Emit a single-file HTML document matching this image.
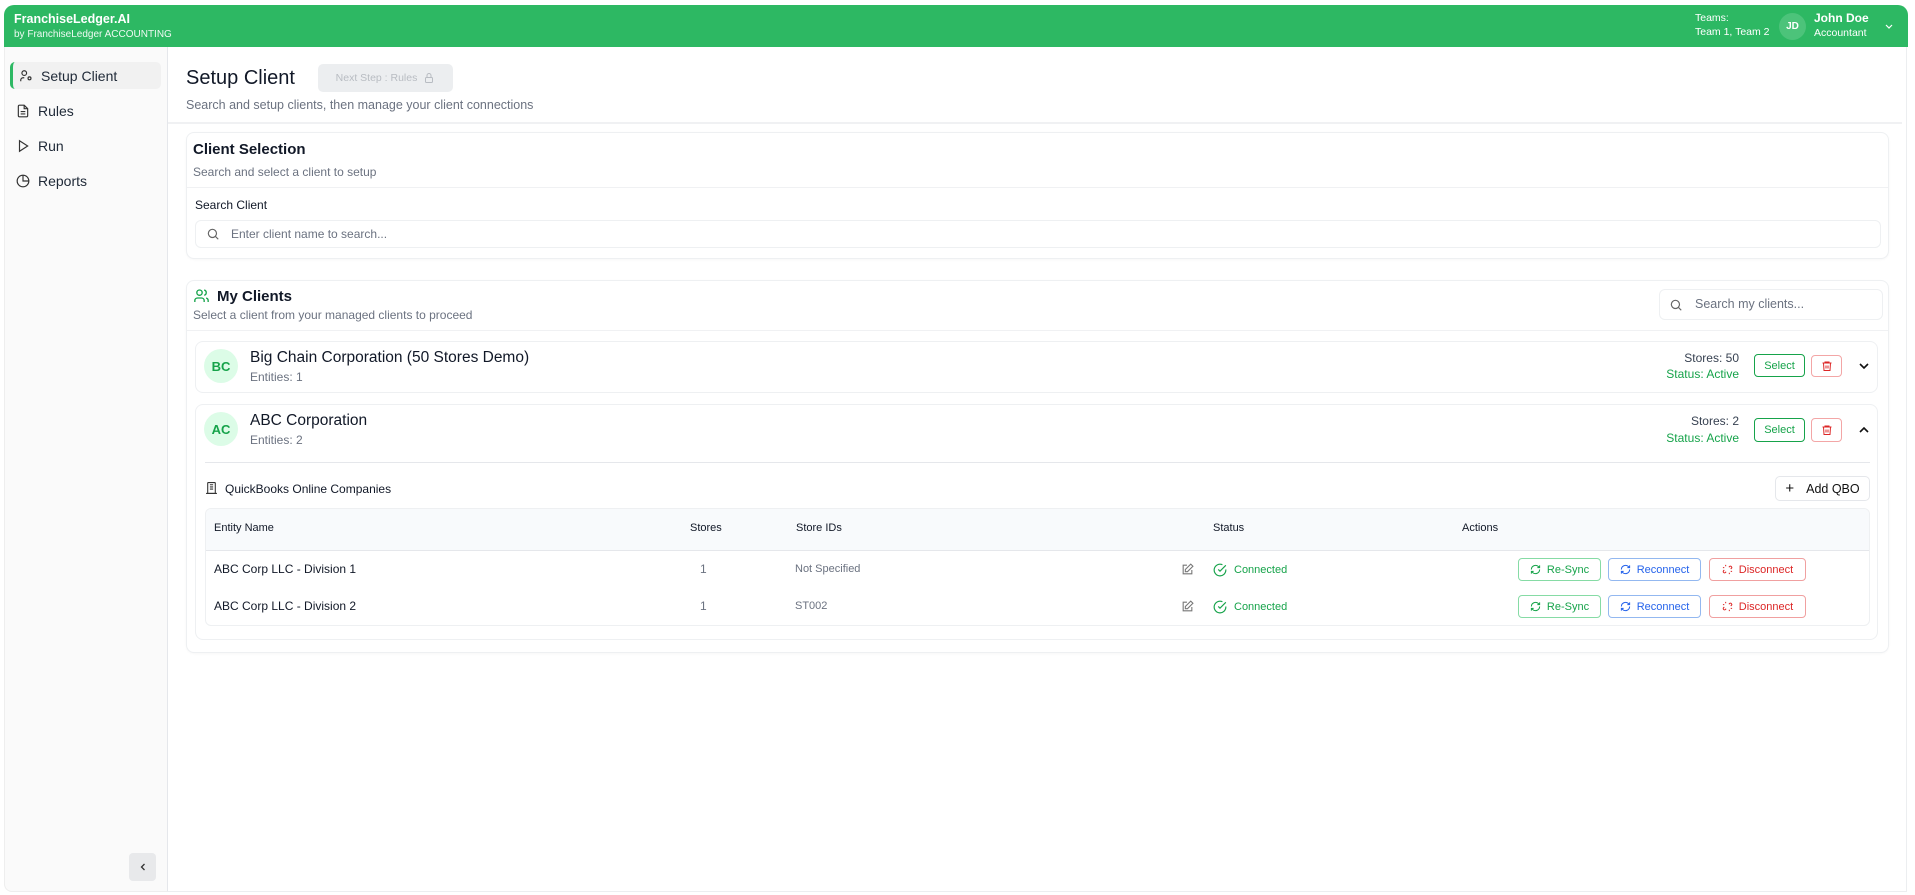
<!DOCTYPE html>
<html><head><meta charset="utf-8"><style>
*{box-sizing:border-box;margin:0;padding:0}
body{width:1915px;height:895px;background:#fff;font-family:"Liberation Sans",sans-serif;color:#111827;position:relative;overflow:hidden}
.a{position:absolute}
.hdr{left:4px;top:5px;width:1904px;height:42px;background:#2db863;border-radius:10px 10px 0 0;color:#fff}
.side{left:4px;top:47px;width:164px;height:845px;background:#fafafa;border-right:1px solid #e5e7eb;border-left:1px solid #eee;border-bottom:1px solid #eee;border-radius:0 0 0 8px}
.nav{left:10px;height:27px;width:151px;font-size:14px;display:flex;align-items:center;gap:8px;padding-left:6px;color:#1f2937}
.card{border:1px solid #eef0f2;border-radius:8px;background:#fff;box-shadow:0 1px 2px rgba(0,0,0,.03)}
.g{color:#6b7280}
.btn{border-radius:4px;font-size:11px;display:flex;align-items:center;justify-content:center;gap:6px;background:#fff}
.row{border:1px solid #eef0f2;border-radius:8px;left:195px;width:1683px}
.av{width:34px;height:34px;border-radius:50%;background:#dcfce7;color:#16a34a;font-weight:bold;font-size:13px;display:flex;align-items:center;justify-content:center}
</style></head><body>
<div class="a hdr">
 <div class="a" style="left:10px;top:7px;font-size:12.5px;font-weight:bold">FranchiseLedger.AI</div>
 <div class="a" style="left:10px;top:24px;font-size:10px;opacity:.92">by FranchiseLedger ACCOUNTING</div>
 <div class="a" style="left:1691px;top:6px;font-size:10.5px;line-height:14px">Teams:<br>Team 1, Team 2</div>
 <div class="a" style="left:1775px;top:8px;width:27px;height:27px;border-radius:50%;background:#4cc37a;font-size:10px;font-weight:bold;display:flex;align-items:center;justify-content:center">JD</div>
 <div class="a" style="left:1810px;top:6px;font-size:12px;font-weight:bold">John Doe</div>
 <div class="a" style="left:1810px;top:22px;font-size:10.5px">Accountant</div>
 <svg class="a" style="left:1880px;top:18px" width="10" height="8" viewBox="0 0 10 8"><path d="M2 2l3 3 3-3" fill="none" stroke="#fff" stroke-width="1.2"/></svg>
</div>
<div class="a side"></div>
<div class="a nav" style="top:62px;background:#f1f1f1;border-left:3px solid #2db863;border-radius:5px"><svg width="14" height="14" viewBox="0 0 24 24" fill="none" stroke="#333" stroke-width="2"><circle cx="9" cy="7" r="4"/><path d="M3 21v-2a4 4 0 014-4h2"/><circle cx="18" cy="16" r="2.5"/></svg>Setup Client</div>
<div class="a nav" style="top:97px"><svg width="14" height="14" viewBox="0 0 24 24" fill="none" stroke="#333" stroke-width="2"><path d="M14 2H6a2 2 0 00-2 2v16a2 2 0 002 2h12a2 2 0 002-2V8z"/><path d="M14 2v6h6M8 13h8M8 17h8"/></svg>Rules</div>
<div class="a nav" style="top:132px"><svg width="14" height="14" viewBox="0 0 24 24" fill="none" stroke="#333" stroke-width="2"><path d="M6 3l14 9-14 9z"/></svg>Run</div>
<div class="a nav" style="top:167px"><svg width="14" height="14" viewBox="0 0 24 24" fill="none" stroke="#333" stroke-width="2"><circle cx="12" cy="12" r="10"/><path d="M12 2v10h10"/></svg>Reports</div>
<div class="a" style="left:129px;top:853px;width:27px;height:28px;background:#e8e9eb;border-radius:4px;display:flex;align-items:center;justify-content:center"><svg width="10" height="10" viewBox="0 0 10 10"><path d="M6.5 2l-3 3 3 3" fill="none" stroke="#333" stroke-width="1.3"/></svg></div>

<div class="a" style="left:186px;top:67px;font-size:20px">Setup Client</div>
<div class="a btn" style="left:318px;top:64px;width:135px;height:28px;background:#eceef0;color:#b8bcc2;font-size:10.5px;border-radius:5px">Next Step : Rules <svg width="12" height="12" viewBox="0 0 24 24" fill="none" stroke="#b8bcc2" stroke-width="2"><rect x="5" y="11" width="14" height="10" rx="2"/><path d="M8 11V7a4 4 0 018 0v4"/></svg></div>
<div class="a g" style="left:186px;top:98px;font-size:12.5px">Search and setup clients, then manage your client connections</div>
<div class="a" style="left:168px;top:122px;width:1734px;height:2px;background:#f0f1f3"></div>

<div class="a card" style="left:186px;top:132px;width:1703px;height:127px"></div>
<div class="a" style="left:193px;top:141px;font-size:15px;font-weight:bold">Client Selection</div>
<div class="a g" style="left:193px;top:165px;font-size:12px">Search and select a client to setup</div>
<div class="a" style="left:187px;top:187px;width:1701px;height:1px;background:#f0f1f3"></div>
<div class="a" style="left:195px;top:198px;font-size:12px">Search Client</div>
<div class="a" style="left:195px;top:220px;width:1686px;height:28px;border:1px solid #eef0f2;border-radius:6px"></div>
<svg class="a" style="left:206px;top:227px" width="14" height="14" viewBox="0 0 24 24" fill="none" stroke="#666" stroke-width="2"><circle cx="11" cy="11" r="7"/><path d="M21 21l-5-5"/></svg>
<div class="a g" style="left:231px;top:227px;font-size:12px">Enter client name to search...</div>

<div class="a card" style="left:186px;top:280px;width:1703px;height:373px"></div>
<svg class="a" style="left:193px;top:288px" width="17" height="16" viewBox="0 0 24 24" fill="none" stroke="#16a34a" stroke-width="2"><circle cx="9" cy="7" r="4"/><path d="M2 21v-2a4 4 0 014-4h6a4 4 0 014 4v2M16 3.1a4 4 0 010 7.8M22 21v-2a4 4 0 00-3-3.9"/></svg>
<div class="a" style="left:217px;top:288px;font-size:15px;font-weight:bold">My Clients</div>
<div class="a g" style="left:193px;top:308px;font-size:12px">Select a client from your managed clients to proceed</div>
<div class="a" style="left:1659px;top:289px;width:224px;height:31px;border:1px solid #eef0f2;border-radius:6px"></div>
<svg class="a" style="left:1669px;top:298px" width="14" height="14" viewBox="0 0 24 24" fill="none" stroke="#666" stroke-width="2"><circle cx="11" cy="11" r="7"/><path d="M21 21l-5-5"/></svg>
<div class="a g" style="left:1695px;top:297px;font-size:12.5px">Search my clients...</div>
<div class="a" style="left:187px;top:330px;width:1701px;height:1px;background:#f0f1f3"></div>

<div class="a row" style="top:341px;height:52px"></div>
<div class="a av" style="left:204px;top:349px">BC</div>
<div class="a" style="left:250px;top:349px;font-size:15.5px">Big Chain Corporation (50 Stores Demo)</div>
<div class="a g" style="left:250px;top:370px;font-size:12px">Entities: 1</div>
<div class="a" style="left:1600px;top:351px;width:139px;text-align:right;font-size:12px;color:#374151">Stores: 50</div>
<div class="a" style="left:1600px;top:367px;width:139px;text-align:right;font-size:12px;color:#16a34a">Status: Active</div>
<div class="a btn" style="left:1754px;top:354px;width:51px;height:23px;border:1px solid #16a34a;color:#16a34a">Select</div>
<div class="a btn" style="left:1811px;top:355px;width:31px;height:22px;border:1px solid #f3a6a6"><svg width="12" height="12" viewBox="0 0 24 24" fill="none" stroke="#dc2626" stroke-width="2"><path d="M3 6h18M8 6V4h8v2M5 6l1 15h12l1-15M10 11v6M14 11v6"/></svg></div>
<svg class="a" style="left:1858px;top:361px" width="12" height="10" viewBox="0 0 12 10"><path d="M2 3l4 4 4-4" fill="none" stroke="#111" stroke-width="1.6"/></svg>

<div class="a row" style="top:404px;height:236px"></div>
<div class="a av" style="left:204px;top:412px">AC</div>
<div class="a" style="left:250px;top:412px;font-size:15.5px">ABC Corporation</div>
<div class="a g" style="left:250px;top:433px;font-size:12px">Entities: 2</div>
<div class="a" style="left:1600px;top:414px;width:139px;text-align:right;font-size:12px;color:#374151">Stores: 2</div>
<div class="a" style="left:1600px;top:431px;width:139px;text-align:right;font-size:12px;color:#16a34a">Status: Active</div>
<div class="a btn" style="left:1754px;top:418px;width:51px;height:24px;border:1px solid #16a34a;color:#16a34a">Select</div>
<div class="a btn" style="left:1811px;top:418px;width:31px;height:24px;border:1px solid #f3a6a6"><svg width="12" height="12" viewBox="0 0 24 24" fill="none" stroke="#dc2626" stroke-width="2"><path d="M3 6h18M8 6V4h8v2M5 6l1 15h12l1-15M10 11v6M14 11v6"/></svg></div>
<svg class="a" style="left:1858px;top:425px" width="12" height="10" viewBox="0 0 12 10"><path d="M2 7l4-4 4 4" fill="none" stroke="#111" stroke-width="1.6"/></svg>
<div class="a" style="left:205px;top:462px;width:1665px;height:1px;background:#e5e7eb"></div>
<svg class="a" style="left:205px;top:481px" width="13" height="14" viewBox="0 0 24 24" fill="none" stroke="#333" stroke-width="2"><rect x="5" y="2" width="14" height="20" rx="1"/><path d="M9 6h6M9 10h6M9 14h6M2 22h20"/></svg>
<div class="a" style="left:225px;top:482px;font-size:12px">QuickBooks Online Companies</div>
<div class="a btn" style="left:1775px;top:476px;width:95px;height:25px;border:1px solid #e5e7eb;font-size:12.5px;color:#111;gap:12px;border-radius:5px"><span style="font-size:15px">+</span>Add QBO</div>

<div class="a" style="left:205px;top:508px;width:1665px;height:118px;border:1px solid #eef0f2;border-radius:6px;overflow:hidden">
 <div style="height:42px;background:#f8fafc;border-bottom:1px solid #e5e7eb"></div>
</div>
<div class="a" style="left:214px;top:522px;font-size:11px">Entity Name</div>
<div class="a" style="left:690px;top:522px;font-size:11px">Stores</div>
<div class="a" style="left:796px;top:522px;font-size:11px">Store IDs</div>
<div class="a" style="left:1213px;top:522px;font-size:11px">Status</div>
<div class="a" style="left:1462px;top:522px;font-size:11px">Actions</div>

<div class="a" style="left:214px;top:562px;font-size:12px">ABC Corp LLC - Division 1</div>
<div class="a" style="left:700px;top:562px;font-size:12px;color:#6b7280">1</div>
<div class="a" style="left:795px;top:563px;font-size:11px;color:#6b7280">Not Specified</div>
<div class="a" style="left:214px;top:599px;font-size:12px">ABC Corp LLC - Division 2</div>
<div class="a" style="left:700px;top:599px;font-size:12px;color:#6b7280">1</div>
<div class="a" style="left:795px;top:600px;font-size:11px;color:#6b7280">ST002</div>

<svg class="a" style="left:1181px;top:563px" width="13" height="13" viewBox="0 0 24 24" fill="none" stroke="#777" stroke-width="2"><path d="M11 4H4v16h16v-7"/><path d="M18 2l4 4-10 10H8v-4z"/></svg>
<svg class="a" style="left:1181px;top:600px" width="13" height="13" viewBox="0 0 24 24" fill="none" stroke="#777" stroke-width="2"><path d="M11 4H4v16h16v-7"/><path d="M18 2l4 4-10 10H8v-4z"/></svg>
<svg class="a" style="left:1213px;top:563px" width="14" height="14" viewBox="0 0 24 24" fill="none" stroke="#16a34a" stroke-width="2"><path d="M22 11.1V12a10 10 0 11-5.9-9.1"/><path d="M22 4L12 14l-3-3"/></svg>
<div class="a" style="left:1234px;top:564px;font-size:11px;color:#16a34a">Connected</div>
<svg class="a" style="left:1213px;top:600px" width="14" height="14" viewBox="0 0 24 24" fill="none" stroke="#16a34a" stroke-width="2"><path d="M22 11.1V12a10 10 0 11-5.9-9.1"/><path d="M22 4L12 14l-3-3"/></svg>
<div class="a" style="left:1234px;top:601px;font-size:11px;color:#16a34a">Connected</div>

<div class="a btn" style="left:1518px;top:558px;width:83px;height:23px;border:1px solid #86dba5;color:#16a34a"><svg width="11" height="11" viewBox="0 0 24 24" fill="none" stroke="#16a34a" stroke-width="2.2"><path d="M21 12a9 9 0 01-15 6.7L3 16M3 12a9 9 0 0115-6.7L21 8M21 3v5h-5M3 21v-5h5"/></svg>Re-Sync</div>
<div class="a btn" style="left:1608px;top:558px;width:93px;height:23px;border:1px solid #93b8f0;color:#2563eb"><svg width="11" height="11" viewBox="0 0 24 24" fill="none" stroke="#2563eb" stroke-width="2.2"><path d="M21 12a9 9 0 01-15 6.7L3 16M3 12a9 9 0 0115-6.7L21 8M21 3v5h-5M3 21v-5h5"/></svg>Reconnect</div>
<div class="a btn" style="left:1709px;top:558px;width:97px;height:23px;border:1px solid #f0a0a0;color:#dc2626"><svg width="11" height="11" viewBox="0 0 24 24" fill="none" stroke="#dc2626" stroke-width="2.2"><path d="M9 17l-2 2a3 3 0 01-4-4l2-2M15 7l2-2a3 3 0 014 4l-2 2M8 2v3M2 8h3M16 22v-3M22 16h-3"/></svg>Disconnect</div>
<div class="a btn" style="left:1518px;top:595px;width:83px;height:23px;border:1px solid #86dba5;color:#16a34a"><svg width="11" height="11" viewBox="0 0 24 24" fill="none" stroke="#16a34a" stroke-width="2.2"><path d="M21 12a9 9 0 01-15 6.7L3 16M3 12a9 9 0 0115-6.7L21 8M21 3v5h-5M3 21v-5h5"/></svg>Re-Sync</div>
<div class="a btn" style="left:1608px;top:595px;width:93px;height:23px;border:1px solid #93b8f0;color:#2563eb"><svg width="11" height="11" viewBox="0 0 24 24" fill="none" stroke="#2563eb" stroke-width="2.2"><path d="M21 12a9 9 0 01-15 6.7L3 16M3 12a9 9 0 0115-6.7L21 8M21 3v5h-5M3 21v-5h5"/></svg>Reconnect</div>
<div class="a btn" style="left:1709px;top:595px;width:97px;height:23px;border:1px solid #f0a0a0;color:#dc2626"><svg width="11" height="11" viewBox="0 0 24 24" fill="none" stroke="#dc2626" stroke-width="2.2"><path d="M9 17l-2 2a3 3 0 01-4-4l2-2M15 7l2-2a3 3 0 014 4l-2 2M8 2v3M2 8h3M16 22v-3M22 16h-3"/></svg>Disconnect</div>

<div class="a" style="left:1906px;top:47px;width:1px;height:845px;background:#eceef0"></div>
<div class="a" style="left:168px;top:891px;width:1739px;height:1px;background:#eceef0"></div>
</body></html>
